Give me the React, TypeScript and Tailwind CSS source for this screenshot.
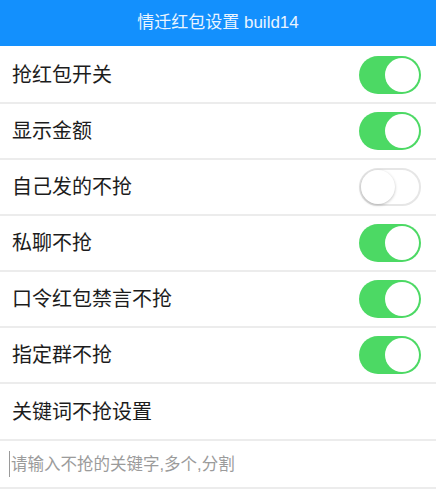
import { useState } from 'react'

const rows = [
  { label: '抢红包开关', on: true },
  { label: '显示金额', on: true },
  { label: '自己发的不抢', on: false },
  { label: '私聊不抢', on: true },
  { label: '口令红包禁言不抢', on: true },
  { label: '指定群不抢', on: true },
]

function Switch({ on, onClick }: { on: boolean; onClick: () => void }) {
  return (
    <button
      type="button"
      onClick={onClick}
      className={
        on
          ? 'flex h-[38px] w-[62px] items-center justify-end rounded-full bg-[#4cd964] p-[2px]'
          : 'flex h-[38px] w-[62px] items-center justify-start rounded-full border-2 border-[#e6e6e6] bg-white'
      }
    >
      <span
        className={
          on
            ? 'block h-[34px] w-[34px] rounded-full bg-white'
            : 'block h-[34px] w-[34px] rounded-full bg-white shadow-[0_1px_3px_rgba(0,0,0,0.25)]'
        }
      />
    </button>
  )
}

export default function App() {
  const [state, setState] = useState(rows.map((r) => r.on))

  return (
    <div className="w-[436px] bg-white font-['Liberation_Sans','Noto_Sans_CJK_SC',sans-serif]">
      {/* Title bar */}
      <header className="mb-[2px] flex h-[46px] items-center justify-center bg-[#1390fd] text-[17px] text-[#eaf4ff]">
        情迁红包设置 build14
      </header>

      {/* Toggle rows */}
      {rows.map((row, i) => (
        <div
          key={row.label}
          className="flex h-[56px] items-center justify-between border-b-2 border-[#ececec] pl-[12px] pr-[15px]"
        >
          <span className="text-[20px] text-[#1c1c1c]">{row.label}</span>
          <Switch
            on={state[i]}
            onClick={() => setState(state.map((v, j) => (j === i ? !v : v)))}
          />
        </div>
      ))}

      {/* Keyword section */}
      <div className="flex h-[57px] items-center border-b-2 border-[#ececec] pl-[12px]">
        <span className="text-[20px] text-[#1c1c1c]">关键词不抢设置</span>
      </div>
      <div className="flex h-[48px] items-center border-b-2 border-[#ececec] pl-[9px]">
        <input
          type="text"
          placeholder="请输入不抢的关键字,多个,分割"
          className="w-full border-l border-[#9a9a9a] pl-[1px] text-[16.5px] leading-[26px] text-[#333] outline-none placeholder:text-[#9b9b9b]"
        />
      </div>
    </div>
  )
}
